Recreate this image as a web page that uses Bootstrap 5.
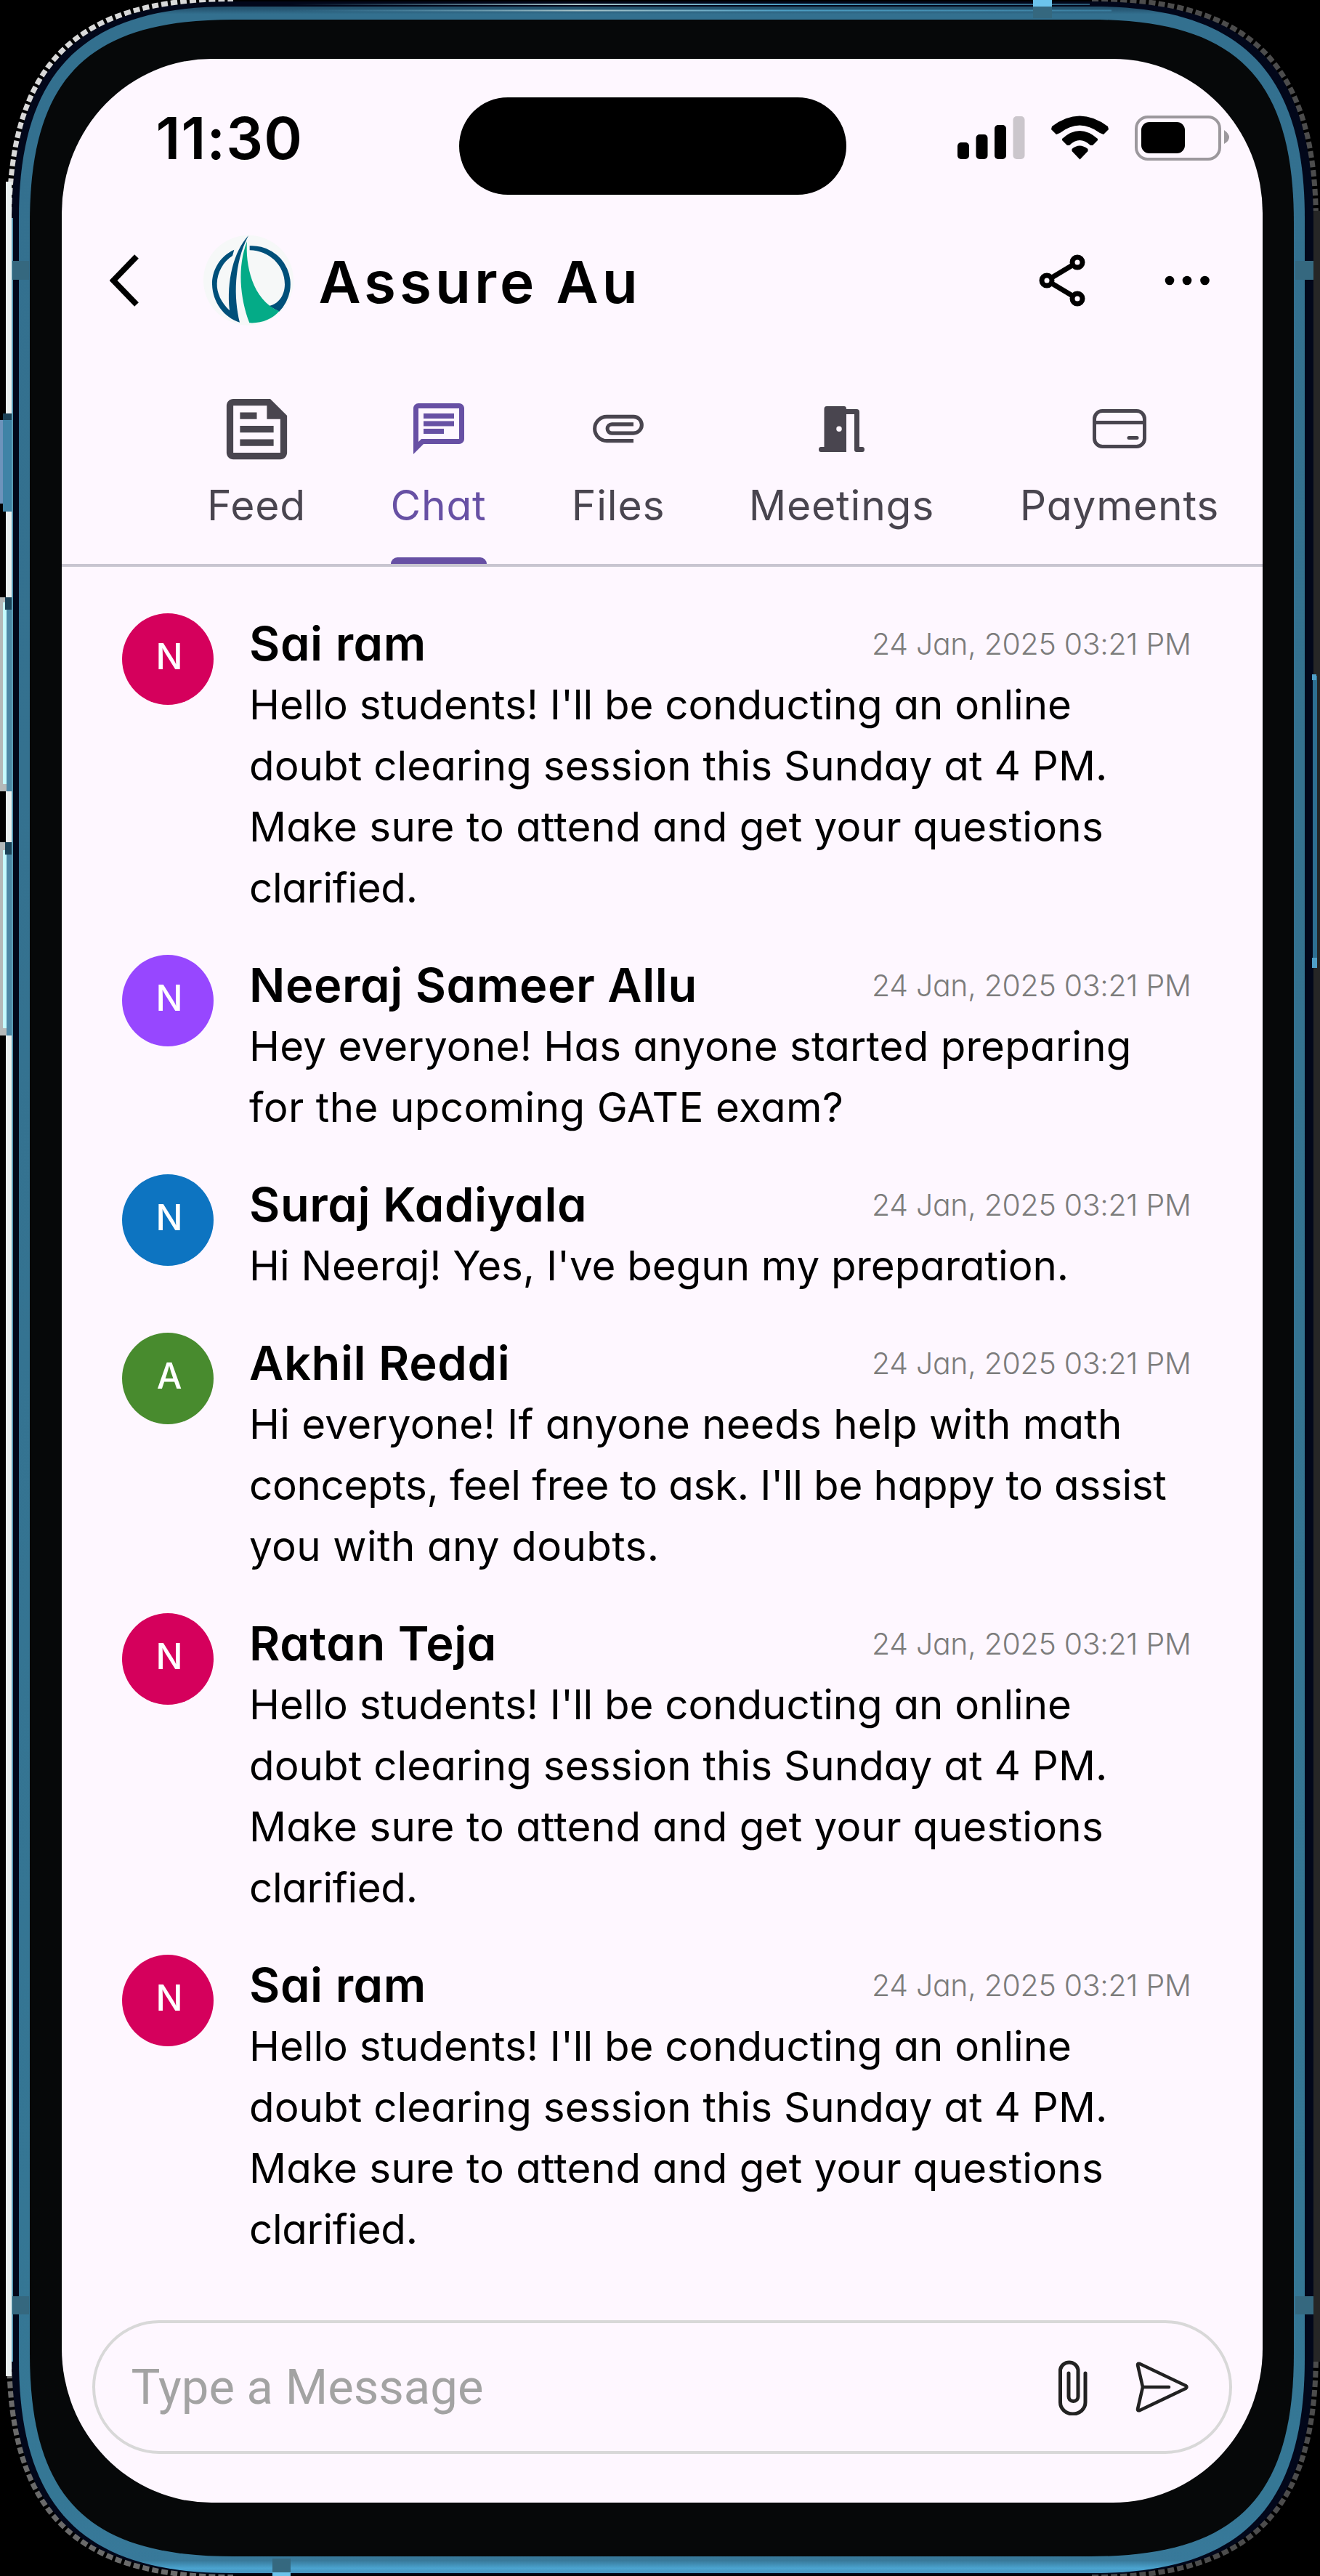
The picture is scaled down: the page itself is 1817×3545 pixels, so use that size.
<!DOCTYPE html>
<html lang="en">
<head>
<meta charset="utf-8">
<meta name="viewport" content="width=device-width, initial-scale=1">
<title>Assure Au – Chat</title>
<link rel="stylesheet" href="https://cdn.jsdelivr.net/npm/bootstrap@5.3.0/dist/css/bootstrap.min.css">
<style>
  body { background: #000; font-family: Inter, "Open Sans", sans-serif; font-feature-settings: "cv11"; color: #000; }
  .phone { width: 1817px; height: 3545px; padding: 81px 79.5px 101px 84.5px; overflow: hidden; }
  .phone-frame { inset: 0; z-index: 0; }
  .phone-screen { z-index: 1; height: 3363px; background: #fef7ff; border-radius: 206px / 212px; overflow: hidden; }
  svg { display: block; flex: none; }

  .status-row { height: 219px; padding: 53px 43px 0 130px; }
  .clock { font-size: 80px; line-height: 112px; font-weight: 600; letter-spacing: 1.2px; width: 417px; }
  .island { width: 533px; height: 134px; border-radius: 67px; background: #000; }
  .status-icons { padding-top: 25px; padding-left: 153px; }

  .title-row { height: 172px; padding-left: 66px; padding-right: 73px; }
  .back-icon { margin-right: 88px; }
  .brand-logo { margin-right: 35px; }
  .chat-title { font-size: 80px; line-height: 100px; font-weight: 600; letter-spacing: 5px; padding-top: 4px; }
  .share-icon { margin-right: 109px; }

  .tab-row { height: 308px; padding: 58px 0 0 202px; gap: 118px; border-bottom: 4px solid #c8c5d0; color: #49454f; }
  .tab-item { height: 246px; padding: 0; color: inherit; flex: none; }
  .tab-item.active { color: #6750a4; }
  .tab-icon { height: 120px; }
  .tab-label { font-size: 57px; line-height: 72px; margin-top: 10px; letter-spacing: .8px; white-space: nowrap; }
  .tab-bar { height: 9px; border-radius: 9px 9px 0 0; background: #6750a4; }
  .w-feed { width: 133px; } .w-chat { width: 132px; } .w-files { width: 127px; }
  .w-meet { width: 252px; } .w-pay { width: 277px; }

  .thread { padding: 63.5px 98px 0 83.5px; }
  .msg { gap: 49px; margin-bottom: 50px; }
  .avatar { width: 126px; height: 126px; flex: none; font-size: 49px; font-weight: 500; color: #fff; padding: 0 0 6px 4px; }
  .bg-rose { background: #d5005c; } .bg-violet { background: #9747ff; }
  .bg-azure { background: #0d74c1; } .bg-leaf { background: #488b2e; }
  .who { font-size: 65px; line-height: 84px; font-weight: 600; letter-spacing: .6px; }
  .when { font-size: 41px; line-height: 84px; font-weight: 300; letter-spacing: -.3px; color: #7c7c7c; }
  .what { font-size: 56.5px; line-height: 84px; white-space: nowrap; }
  .what span { display: block; }
  .sp-0 { letter-spacing: -.05px; } .sp-n { letter-spacing: -.32px; } .sp-1 { letter-spacing: .05px; } .sp-3 { letter-spacing: .23px; } .sp-5 { letter-spacing: .38px; }

  .composer { margin: 33px 42px 0; height: 184px; border: 4px solid #d8d8d8; border-radius: 92px; padding: 0 55px 0 50px; }
  .composer-input { font: 400 67px/80px Roboto, sans-serif; color: #a3a3a3; }
  .clip-icon { margin-right: 66px; }
</style>
<script src="https://cdn.jsdelivr.net/npm/bootstrap@5.3.0/dist/js/bootstrap.bundle.min.js"></script>
</head>
<body>
<div class="phone position-relative">
  <svg class="phone-frame position-absolute" width="1817" height="3545" viewBox="0 0 1817 3545" aria-hidden="true">
    <defs>
      <linearGradient id="rim" x1="0" y1="0" x2="0" y2="3545" gradientUnits="userSpaceOnUse">
        <stop offset="0" stop-color="#1d4358"/><stop offset=".0035" stop-color="#265672"/><stop offset=".0055" stop-color="#33708f"/><stop offset=".3" stop-color="#34718f"/><stop offset=".97" stop-color="#357795"/><stop offset=".994" stop-color="#38799a"/><stop offset=".997" stop-color="#4ba4d0"/><stop offset="1" stop-color="#3f87b0"/>
      </linearGradient>
      <linearGradient id="topGlow"><stop offset="0" stop-color="#4d9fc4" stop-opacity="0"/><stop offset=".35" stop-color="#a9c4c8"/><stop offset=".6" stop-color="#4d9fc4"/><stop offset="1" stop-color="#4d9fc4" stop-opacity=".5"/></linearGradient>
    </defs>
    <!-- antialias fringe of the cut-out -->
    <g fill="none" stroke-width="14" stroke-dasharray="9 4">
      <path stroke="#d8d8d8" d="M16 307C16 90 104 2 321 2"/>
      <path stroke="#4c4c4c" d="M1503 2C1720 2 1808 90 1808 307"/>
      <path stroke="#6a6a6a" d="M16 3238C16 3455 104 3543 321 3543"/>
      <path stroke="#4c4c4c" d="M1503 3543C1720 3543 1808 3455 1808 3238"/>
    </g>
    <path fill="#e8eeee" d="M8 250h8v3020H8z"/>
    <path fill="#262626" d="M1807 290h10v2960h-10z"/>
    <!-- side buttons -->
    <path fill="#b4b9b9" d="M0 822h16v267H0zM0 1159h16v266H0z"/>
    <path fill="#c6fbff" d="M4 829h5v250H4zM4 1170h5v245H4z"/>
    <path fill="#4c88a6" d="M9 822h8v267H9zM9 1159h8v266H9z"/>
    <path fill="#1b4257" d="M7 822h9v17H7zM7 1159h9v17H7zM4 569h12v12H4z"/>
    <path fill="#3f83a6" d="M4 578h13v126H4z"/><path fill="#6d93bb" d="M0 578h4v115H0z"/>
    <!-- body, rim and bezel -->
    <path fill="#02071a" d="M16 307C16 90 104 2 321 2H1503C1720 2 1808 90 1808 307V3238C1808 3455 1720 3543 1503 3543H321C104 3543 16 3455 16 3238Z"/>
    <path fill="none" stroke="#5a9cb5" stroke-width="2" d="M17 300V3250"/>
    <path fill="url(#rim)" d="M26 300C26 98 115 9 317 9H1505C1707 9 1796 98 1796 300V3246C1796 3452 1707 3541 1505 3541H317C115 3541 26 3452 26 3246Z"/>
    <path fill="#060809" d="M41 307C41 107 121 27 321 27H1501C1701 27 1781 107 1781 307V3238C1781 3438 1701 3518 1501 3518H321C121 3518 41 3438 41 3238Z"/>
    <path fill="url(#topGlow)" d="M400 5h1100v2H400zM400 13.500h1130v2H400z"/>
    <path fill="#35687f" d="M17 359h23v26H17zM1783 359h25v26h-25zM17 3160h23v25H17zM1783 3160h25v25h-25zM375 3521h25v24h-25zM1422 8h26v17h-26z"/>
    <path fill="#6cc4ec" d="M1422 0h26v9h-26zM375 3540h25v5h-25z"/>
    <path fill="#2d6f92" d="M1807 930h6v395h-6z"/><path fill="#4f9fc8" d="M1806 928h6v8h-6zM1806 1318h7v14h-7z"/>
  </svg>

  <main class="phone-screen position-relative d-flex flex-column">
    <div class="status-row d-flex align-items-start">
      <div class="clock">11:30</div>
      <div class="island"></div>
      <div class="status-icons">
        <svg width="376" height="62" viewBox="0 0 376 62">
          <g><rect x="0" y="37" width="16" height="23" rx="5"/><rect x="25.500" y="26" width="16" height="34" rx="5"/><rect x="51" y="13" width="16" height="47" rx="5"/><rect x="76.500" y="1" width="16" height="59" rx="5" fill="#cbc6cc"/></g>
          <path d="M130 15Q168 -14 207 15L208 19L201 26L196 24Q168 3 141 24L136 26L129 19Z"/>
          <path d="M144 32Q168 10 193 32V34L186 41H183Q168 27 154 41H151L144 34Z"/>
          <path d="M157.500 46Q168 37 179.500 46V49L168.500 60.500L157.500 49Z"/>
          <rect x="246" y="2" width="115" height="58" rx="16" fill="none" stroke="#9c989d" stroke-width="4"/>
          <rect x="253" y="9" width="60" height="43" rx="11"/>
          <path fill="#9c989d" d="M367 20Q374 25 374 30T367 39Z"/>
        </svg>
      </div>
    </div>

    <header class="title-row d-flex align-items-center">
      <svg class="back-icon" width="41" height="72" viewBox="0 0 41 72" fill="none" stroke="#000" stroke-width="8"><path d="M37 3L5 36L37 69"/></svg>
      <svg class="brand-logo" width="124" height="126" viewBox="35 70 372 378">
        <circle cx="221" cy="258" r="186" fill="#f6f8f8"/>
        <path fill="#00507a" d="M162 132C100 160 70 220 71 275C73 350 120 412 185 432C160 330 160 190 221 73C160 140 130 260 143 383C108 350 90 310 91 272C92 225 118 180 155 157Z"/>
        <path fill="#00507a" d="M226 116A159 159 0 0 1 348 387L305 364C345 358 371 320 371 275C371 195 305 135 226 134Z"/>
        <path fill="#04ab87" d="M215 98C208 190 235 340 348 386C320 418 275 437 225 434C185 330 175 200 215 98Z"/>
      </svg>
      <div class="chat-title me-auto">Assure Au</div>
      <svg class="share-icon" width="64" height="72" viewBox="0 0 64 72" fill="none" stroke="#000" stroke-width="7"><circle cx="11" cy="36" r="7"/><circle cx="53" cy="11" r="7"/><circle cx="53" cy="61" r="7"/><path d="M17 32.500L47 14.500M17 39.500L47 57.500"/></svg>
      <svg width="62" height="14" viewBox="0 0 62 14"><circle cx="7" cy="7" r="6.300"/><circle cx="31" cy="7" r="6.300"/><circle cx="55.500" cy="7" r="6.300"/></svg>
    </header>

    <nav class="tab-row d-flex">
      <a class="tab-item w-feed d-flex flex-column align-items-center text-decoration-none">
        <div class="tab-icon d-flex align-items-center"><svg width="111" height="111" viewBox="0 0 24 24" fill="currentColor"><path fill-rule="evenodd" d="M16 3H5c-1.100 0-2 .9-2 2v14c0 1.100.9 2 2 2h14c1.100 0 2-.9 2-2V8l-5-5zM19 19H5V5h10v4h4v10zM7 17h10v-2H7v2zm5-10H7v2h5V7zm-5 6h10v-2H7v2z"/></svg></div>
        <div class="tab-label">Feed</div>
      </a>
      <a class="tab-item active w-chat d-flex flex-column align-items-center text-decoration-none">
        <div class="tab-icon d-flex align-items-center"><svg width="84" height="84" viewBox="0 0 24 24" fill="currentColor"><path d="M4 4h16v12H5.170L4 17.170V4m0-2c-1.100 0-1.990.9-1.990 2L2 22l4-4h14c1.100 0 2-.9 2-2V4c0-1.100-.9-2-2-2H4zm2 10h8v2H6v-2zm0-3h12v2H6V9zm0-3h12v2H6V6z"/></svg></div>
        <div class="tab-label">Chat</div>
        <div class="tab-bar w-100 mt-auto"></div>
      </a>
      <a class="tab-item w-files d-flex flex-column align-items-center text-decoration-none">
        <div class="tab-icon d-flex align-items-center"><svg width="84" height="84" viewBox="0 .5 24 24" fill="none" stroke="currentColor" stroke-width="1.450"><path d="M18 17.250H7.500C4.900 17.250 2.750 15.100 2.750 12.500S4.900 7.750 7.500 7.750H18a3.250 3.250 0 0 1 0 6.500H9.500a1.750 1.750 0 0 1 0-3.500H18"/></svg></div>
        <div class="tab-label">Files</div>
      </a>
      <a class="tab-item w-meet d-flex flex-column align-items-center text-decoration-none">
        <div class="tab-icon d-flex align-items-center"><svg width="63" height="63" viewBox="0 0 63 63" fill="currentColor"><path fill-rule="evenodd" d="M11 0H35Q38 0 38 4H52Q56 4 56 8V56H60Q63 56 63 59.500T60 63H52Q49 63 49 60V11H38V63H3Q0 63 0 59.500T3 56H7.500V4Q7.500 0 11 0ZM28 27.500A3.700 3.700 0 1 0 28 35A3.700 3.700 0 1 0 28 27.500Z"/></svg></div>
        <div class="tab-label">Meetings</div>
      </a>
      <a class="tab-item w-pay d-flex flex-column align-items-center text-decoration-none">
        <div class="tab-icon d-flex align-items-center"><svg width="74" height="54" viewBox="0 0 74 54" fill="none" stroke="currentColor" stroke-width="5"><rect x="2.500" y="2.500" width="69" height="49" rx="11"/><path d="M3 18.500H71"/><path stroke-linecap="round" d="M50 39.500H61"/></svg></div>
        <div class="tab-label">Payments</div>
      </a>
    </nav>

    <section class="thread">
      <article class="msg d-flex align-items-start">
        <div class="avatar bg-rose rounded-circle d-flex align-items-center justify-content-center">N</div>
        <div class="flex-grow-1">
          <div class="d-flex justify-content-between"><div class="who">Sai ram</div><div class="when">24 Jan, 2025 03:21 PM</div></div>
          <div class="what"><span class="sp-0">Hello students! I'll be conducting an online</span><span class="sp-1">doubt clearing session this Sunday at 4 PM.</span><span class="sp-3">Make sure to attend and get your questions</span><span class="sp-n">clarified.</span></div>
        </div>
      </article>
      <article class="msg d-flex align-items-start">
        <div class="avatar bg-violet rounded-circle d-flex align-items-center justify-content-center">N</div>
        <div class="flex-grow-1">
          <div class="d-flex justify-content-between"><div class="who">Neeraj Sameer Allu</div><div class="when">24 Jan, 2025 03:21 PM</div></div>
          <div class="what"><span class="sp-3">Hey everyone! Has anyone started preparing</span><span class="sp-5">for the upcoming GATE exam?</span></div>
        </div>
      </article>
      <article class="msg d-flex align-items-start">
        <div class="avatar bg-azure rounded-circle d-flex align-items-center justify-content-center">N</div>
        <div class="flex-grow-1">
          <div class="d-flex justify-content-between"><div class="who">Suraj Kadiyala</div><div class="when">24 Jan, 2025 03:21 PM</div></div>
          <div class="what"><span class="sp-0">Hi Neeraj! Yes, I've begun my preparation.</span></div>
        </div>
      </article>
      <article class="msg d-flex align-items-start">
        <div class="avatar bg-leaf rounded-circle d-flex align-items-center justify-content-center">A</div>
        <div class="flex-grow-1">
          <div class="d-flex justify-content-between"><div class="who">Akhil Reddi</div><div class="when">24 Jan, 2025 03:21 PM</div></div>
          <div class="what"><span class="sp-3">Hi everyone! If anyone needs help with math</span><span class="sp-n">concepts, feel free to ask. I'll be happy to assist</span><span class="sp-5">you with any doubts.</span></div>
        </div>
      </article>
      <article class="msg d-flex align-items-start">
        <div class="avatar bg-rose rounded-circle d-flex align-items-center justify-content-center">N</div>
        <div class="flex-grow-1">
          <div class="d-flex justify-content-between"><div class="who">Ratan Teja</div><div class="when">24 Jan, 2025 03:21 PM</div></div>
          <div class="what"><span class="sp-0">Hello students! I'll be conducting an online</span><span class="sp-1">doubt clearing session this Sunday at 4 PM.</span><span class="sp-3">Make sure to attend and get your questions</span><span class="sp-n">clarified.</span></div>
        </div>
      </article>
      <article class="msg d-flex align-items-start">
        <div class="avatar bg-rose rounded-circle d-flex align-items-center justify-content-center">N</div>
        <div class="flex-grow-1">
          <div class="d-flex justify-content-between"><div class="who">Sai ram</div><div class="when">24 Jan, 2025 03:21 PM</div></div>
          <div class="what"><span class="sp-0">Hello students! I'll be conducting an online</span><span class="sp-1">doubt clearing session this Sunday at 4 PM.</span><span class="sp-3">Make sure to attend and get your questions</span><span class="sp-n">clarified.</span></div>
        </div>
      </article>
    </section>

    <div class="composer d-flex align-items-center">
      <div class="composer-input flex-grow-1">Type a Message</div>
      <svg class="clip-icon" width="40" height="78" viewBox="0 0 40 78" fill="none" stroke="#222" stroke-width="5" stroke-linecap="round"><path d="M37 20V60A17.200 16 0 0 1 2.500 60V15A12.500 12.500 0 0 1 27 15V52A6.500 6.500 0 0 1 14 52V20"/></svg>
      <svg width="74" height="70" viewBox="0 0 74 70" fill="none" stroke="#222" stroke-width="4.600" stroke-linecap="round" stroke-linejoin="round"><path d="M10 35H46M10 35L3 4.500Q3 2 6 3L69 33Q72 35 69 37L6 67Q3 68 3 65.500Z"/></svg>
    </div>
  </main>
</div>
</body>
</html>
